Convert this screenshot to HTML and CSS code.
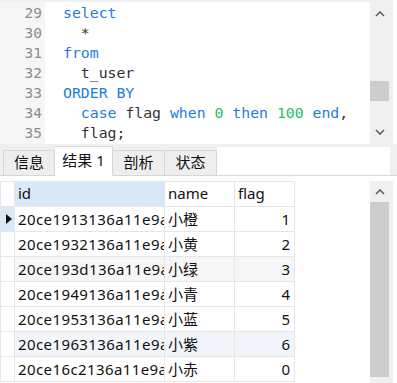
FILE: index.html
```html
<!DOCTYPE html>
<html lang="zh">
<head>
    <meta charset="UTF-8">
    <title>查询结果</title>
    <link rel="stylesheet" href="styles.css">
</head>
<body>
    <div class="editor">
        <div class="gutter">
            <div>29</div>
            <div>30</div>
            <div>31</div>
            <div>32</div>
            <div>33</div>
            <div>34</div>
            <div>35</div>
        </div>
        <pre class="code"><span class="kw">select</span>
  *
<span class="kw">from</span>
  t_user
<span class="kw">ORDER BY</span>
  <span class="kw">case</span> flag <span class="kw">when</span> <span class="num">0</span> <span class="kw">then</span> <span class="num">100</span> <span class="kw">end</span>,
  flag;</pre>
        <div class="vscroll">
            <div class="arrow arrow-top">
                <svg width="10" height="6" viewBox="0 0 10 6"><polyline points="1,5 5,1 9,5" fill="none" stroke="#5f5f5f" stroke-width="1.6"/></svg>
            </div>
            <div class="track">
                <div class="thumb thumb-editor"></div>
            </div>
            <div class="arrow arrow-bottom">
                <svg width="10" height="6" viewBox="0 0 10 6"><polyline points="1,1 5,5 9,1" fill="none" stroke="#5f5f5f" stroke-width="1.6"/></svg>
            </div>
        </div>
    </div>

    <div class="tabbar">
        <div class="tab">信息</div>
        <div class="tab active">结果 1</div>
        <div class="tab">剖析</div>
        <div class="tab">状态</div>
        <div class="tab-fill"></div>
    </div>

    <div class="results">
        <div class="grid">
            <div class="cell ind"></div>
            <div class="cell head sel">id</div>
            <div class="cell head">name</div>
            <div class="cell head">flag</div>

            <div class="cell ind current">
                <svg width="6" height="10" viewBox="0 0 6 10"><polygon points="0,0 6,5 0,10" fill="#111"/></svg>
            </div>
            <div class="cell id-cell">20ce1913136a11e9a</div>
            <div class="cell">小橙</div>
            <div class="cell num-cell">1</div>

            <div class="cell ind"></div>
            <div class="cell id-cell">20ce1932136a11e9a</div>
            <div class="cell">小黄</div>
            <div class="cell num-cell">2</div>

            <div class="cell ind"></div>
            <div class="cell id-cell grey">20ce193d136a11e9a</div>
            <div class="cell grey">小绿</div>
            <div class="cell grey num-cell">3</div>

            <div class="cell ind"></div>
            <div class="cell id-cell">20ce1949136a11e9a</div>
            <div class="cell">小青</div>
            <div class="cell num-cell">4</div>

            <div class="cell ind"></div>
            <div class="cell id-cell">20ce1953136a11e9a</div>
            <div class="cell">小蓝</div>
            <div class="cell num-cell">5</div>

            <div class="cell ind"></div>
            <div class="cell id-cell blue">20ce1963136a11e9a</div>
            <div class="cell blue">小紫</div>
            <div class="cell blue num-cell">6</div>

            <div class="cell ind"></div>
            <div class="cell id-cell">20ce16c2136a11e9a</div>
            <div class="cell">小赤</div>
            <div class="cell num-cell">0</div>
        </div>

        <div class="vscroll grid-scroll">
            <div class="arrow arrow-grid">
                <svg width="10" height="6" viewBox="0 0 10 6"><polyline points="1,5 5,1 9,5" fill="none" stroke="#5f5f5f" stroke-width="1.6"/></svg>
            </div>
            <div class="track">
                <div class="thumb thumb-grid"></div>
            </div>
        </div>
    </div>
</body>
</html>
```

FILE: styles.css
```css
* {
    margin: 0;
    padding: 0;
    box-sizing: border-box;
}

body {
    width: 397px;
    height: 383px;
    overflow: hidden;
    background: #ffffff;
    font-family: 'Noto Sans', 'Noto Sans CJK SC', sans-serif;
    font-size: 15px;
    color: #111;
}

/* Editor */
.editor {
    display: flex;
    height: 144px;
    width: 393px;
    border-top: 2px solid #f0f0f0;
    background: #ffffff;
}

.gutter {
    width: 45px;
    background: #f6f6f6;
    padding: 1px 3px 0 0;
    text-align: right;
    font-family: 'DejaVu Sans Mono', monospace;
    font-size: 14.5px;
    line-height: 20px;
    color: #8c8c8c;
}

.code {
    flex: 1;
    padding: 1px 0 0 18px;
    font-family: 'DejaVu Sans Mono', monospace;
    font-size: 14.8px;
    line-height: 20px;
    color: #333;
    overflow: hidden;
}

.kw {
    color: #1f7be3;
}

.num {
    color: #1fbf5f;
}

/* Scrollbars */
.vscroll {
    width: 23px;
    background: #f0f0f0;
    display: flex;
    flex-direction: column;
}

.arrow {
    display: flex;
    justify-content: center;
    padding-right: 4px;
}

.arrow-top {
    height: 24px;
    align-items: center;
}

.arrow-bottom {
    height: 24px;
    align-items: center;
}

.track {
    flex: 1;
}

.thumb {
    width: 19px;
    background: #cdcdcd;
}

.thumb-editor {
    margin-top: 55px;
    height: 20px;
}

/* Tabs */
.tabbar {
    display: flex;
    align-items: flex-end;
    height: 32px;
    background: #f0f0f0;
    padding: 0 7px 0 3px;
    border-bottom: 1px solid #d9d9d9;
}

.tab {
    height: 26px;
    min-width: 52px;
    padding: 0 7px;
    margin-bottom: -1px;
    background: #eeeeee;
    border: 1px solid #d6d6d6;
    border-left: none;
    text-align: center;
    line-height: 23px;
    color: #111;
}

.tab:first-child {
    border-left: 1px solid #d6d6d6;
}

.tab.active {
    height: 30px;
    min-width: 58px;
    background: #ffffff;
    border-bottom-color: #ffffff;
    line-height: 27px;
}

.tab-fill {
    flex: 1;
    height: 28px;
    background: #ffffff;
}

/* Result grid */
.results {
    display: flex;
    padding-top: 5px;
    height: 207px;
}

.grid {
    display: grid;
    grid-template-columns: 15px 150px 70px 60px;
    grid-auto-rows: 25px;
    align-content: start;
    border-top: 1px solid #e6e6e6;
}

.cell {
    border-right: 1px solid #e6e6e6;
    border-bottom: 1px solid #e6e6e6;
    padding: 0 0 0 3px;
    line-height: 24px;
    white-space: nowrap;
    overflow: hidden;
}

.id-cell {
    letter-spacing: 0.4px;
}

.head {
    line-height: 22px;
}

.head.sel {
    background: #d9e8f6;
}

.ind {
    padding: 0;
    display: flex;
    align-items: center;
    padding-left: 5px;
    border-left: 1px solid #e6e6e6;
}

.ind.current {
    background: #d9e8f6;
}

.num-cell {
    text-align: right;
    padding: 0 4px 0 0;
}

.grey {
    background: #f6f6f6;
}

.blue {
    background: #f2f6fb;
}

.grid-scroll {
    margin-left: auto;
    margin-right: 4px;
    height: 202px;
}

.arrow-grid {
    height: 21px;
    align-items: center;
}

.thumb-grid {
    height: 175px;
}
```
